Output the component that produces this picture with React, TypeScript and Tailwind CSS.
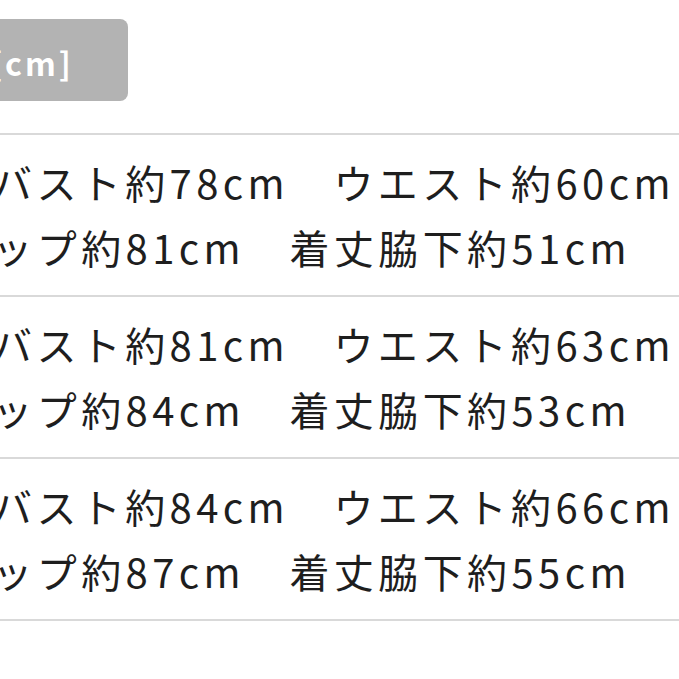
const rows = [
  { bust: "78", waist: "60", hip: "81", length: "51" },
  { bust: "81", waist: "63", hip: "84", length: "53" },
  { bust: "84", waist: "66", hip: "87", length: "55" },
];

export default function App() {
  return (
    <div className="h-[679px] w-[679px] overflow-hidden bg-white font-['Noto_Sans_CJK_JP',sans-serif] text-[#1e1e1e]">
      <div className="pt-[19px]">
        <div className="-ml-[120px] inline-flex h-[82px] items-center rounded-[8px] bg-[#b3b3b3] pl-[40px] pr-[54px] pt-[4px] text-[32px] font-bold tracking-[3px] text-white">
          <span>単位[cm]</span>
        </div>
      </div>

      <div className="-ml-[52px] mt-[32px] w-[800px] border-b-2 border-[#d9d9d9]">
        {rows.map((r) => (
          <div key={r.bust} className="border-t-2 border-[#d9d9d9] py-[15px] text-[40px] leading-[65px] tracking-[4.4px] whitespace-nowrap">
            <p className="pl-[44px]">バスト約{r.bust}cm　ウエスト約{r.waist}cm</p>
            <p>ヒップ約{r.hip}cm　着丈脇下約{r.length}cm</p>
          </div>
        ))}
      </div>
    </div>
  );
}
